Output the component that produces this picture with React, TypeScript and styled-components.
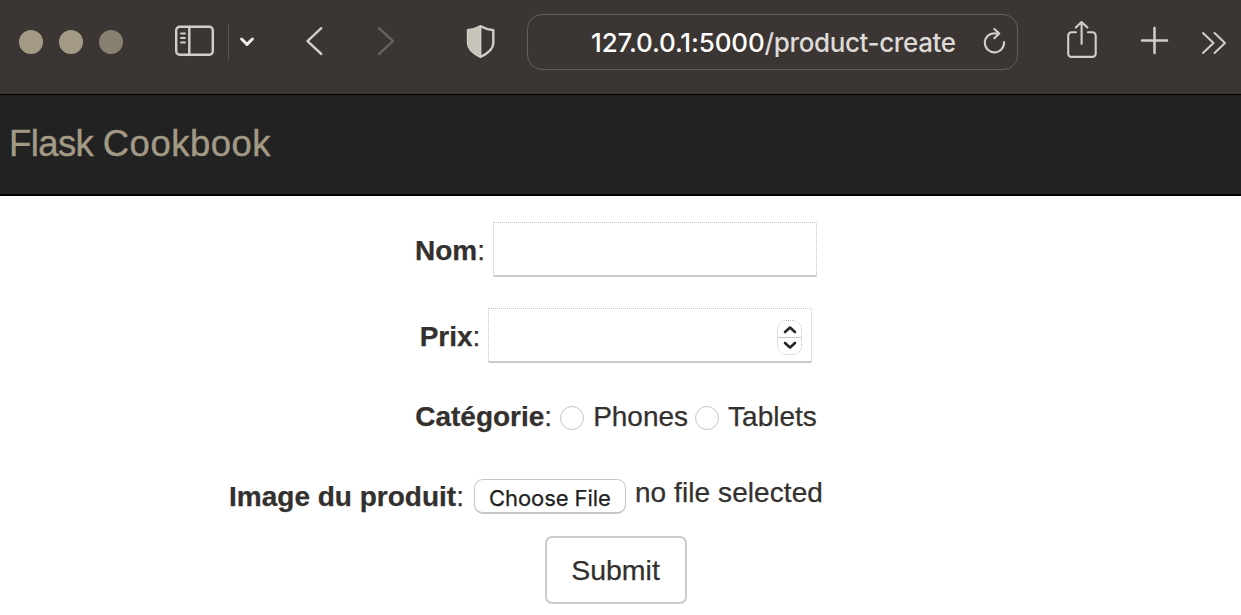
import React from 'react';
import styled, { createGlobalStyle } from 'styled-components';

const GlobalStyle = createGlobalStyle`
  * { box-sizing: border-box; }
  body {
    margin: 0;
    background: #fff;
    color: #33302e;
    font-family: "Liberation Sans", Arial, sans-serif;
    font-size: 28px;
    overflow: hidden;
  }
`;

const Page = styled.div`
  width: 1241px;
  height: 615px;
  overflow: hidden;
`;

const Toolbar = styled.header`
  display: flex;
  align-items: center;
  height: 94px;
  padding: 0 0 10px 19px;
  background: #3b3533;
`;

const Lights = styled.div`
  display: flex;
  gap: 16px;
`;

const Light = styled.span<{ $dim?: boolean }>`
  width: 24px;
  height: 24px;
  border-radius: 50%;
  background: ${(p) => (p.$dim ? '#888071' : '#a39a86')};
`;

const Glyph = styled.svg<{ $gap: number; $color?: string; $weight?: number }>`
  flex: none;
  display: block;
  margin-left: ${(p) => p.$gap}px;
  fill: none;
  stroke: ${(p) => p.$color ?? '#d2cec8'};
  stroke-width: ${(p) => p.$weight ?? 2.4};
  stroke-linecap: round;
  stroke-linejoin: round;
`;

const Divider = styled.span`
  width: 1px;
  height: 36px;
  margin-left: 13px;
  background: #5a5552;
`;

const AddressBar = styled.div`
  display: flex;
  align-items: center;
  flex: none;
  width: 491px;
  height: 56px;
  margin-left: 31px;
  padding-left: 63px;
  border: 1px solid #625e5b;
  border-radius: 15px;
`;

const Url = styled.span`
  width: 366px;
  padding-top: 2px;
  font-family: Inter, sans-serif;
  font-size: 26px;
  font-weight: 500;
  letter-spacing: -0.38px;
  line-height: 32px;
  white-space: nowrap;
  color: #dedad7;
`;

const Host = styled.span`
  letter-spacing: -0.15px;
  color: #fff;
`;

const Navbar = styled.nav`
  display: flex;
  align-items: center;
  height: 102px;
  padding: 0 9px 2px;
  border-top: 1px solid #000;
  border-bottom: 2px solid #000;
  background: #222;
`;

const Brand = styled.a`
  font-size: 36.5px;
  line-height: 40px;
  letter-spacing: 0.5px;
  color: #a39a86;
  -webkit-text-stroke: 0.4px #a39a86;
`;

const BrandLead = styled.span`
  letter-spacing: -0.6px;
`;

const Form = styled.form`
  display: flex;
  flex-direction: column;
  align-items: center;
  width: 1232px;
  padding-top: 26px;
  -webkit-text-stroke: 0.25px currentColor;
`;

const Row = styled.div<{ $height: number; $gap: number }>`
  display: flex;
  align-items: center;
  height: ${(p) => p.$height}px;
  margin-bottom: ${(p) => p.$gap}px;
  line-height: 32px;
  white-space: nowrap;
`;

const Label = styled.label<{ $gap?: number; $drop?: number }>`
  margin-right: ${(p) => p.$gap ?? 8}px;
  padding-top: ${(p) => p.$drop ?? 0}px;
`;

const Field = styled.div`
  display: flex;
  align-items: center;
  width: 324px;
  height: 55px;
  padding-right: 9px;
  border: 1px dotted #c4c4c4;
  border-bottom: 2px solid #cacaca;
`;

const Input = styled.input`
  flex: 1;
  min-width: 0;
  height: 48px;
  border: 0;
  outline: 0;
  background: transparent;
  font: inherit;
`;

const Stepper = styled.span`
  display: flex;
  flex-direction: column;
  width: 25px;
  height: 35px;
  margin-top: 4px;
  border: 1px dotted #bbb;
  border-radius: 9px;
`;

const Step = styled.span`
  display: flex;
  align-items: center;
  justify-content: center;
  height: 16px;
  padding-top: 2px;
  & + & { border-top: 1px solid #c8c8c8; height: 17px; padding-top: 0; }
`;

const StepArrow = styled.svg`
  fill: none;
  stroke: #262626;
  stroke-width: 2.6;
  stroke-linecap: round;
  stroke-linejoin: round;
`;

const Radio = styled.input`
  appearance: none;
  width: 24px;
  height: 24px;
  margin: 2px 9px 0 0;
  border: 1px solid #c6c6c6;
  border-radius: 50%;
`;

const Option = styled.label`
  display: flex;
  align-items: center;
  & + & { margin-left: 7px; }
`;

const FilePicker = styled.div`
  display: flex;
  align-items: center;
  width: 529px;
`;

const FileButton = styled.button`
  width: 152px;
  height: 35px;
  margin-right: 9px;
  padding: 3px 0 0;
  border: 1px solid #c6c6c6;
  border-bottom-width: 2px;
  border-radius: 9px;
  background: #fff;
  color: #1f1f1f;
  font-family: Inter, sans-serif;
  font-size: 22px;
  line-height: 28px;
  letter-spacing: -0.08px;
  white-space: nowrap;
`;

const FileStatus = styled.span`
  padding-bottom: 8px;
  letter-spacing: 0.08px;
`;

const Submit = styled.button`
  width: 142px;
  height: 68px;
  padding: 0 1px 0 0;
  border: 2px solid #cacaca;
  border-radius: 7px;
  background: #fff;
  color: #33302e;
  font: inherit;
  font-size: 28.5px;
`;

export default function App() {
  return (
    <Page>
      <GlobalStyle />
      <Toolbar>
        <Lights>
          <Light />
          <Light />
          <Light $dim />
        </Lights>
        <Glyph $gap={51} width="41" height="60" viewBox="174 12 41 60">
          <rect x="176.2" y="26.7" width="36.6" height="28" rx="3.5" />
          <path d="M189.3 27v28" />
          <path d="M181 33.5h4M181 38h4M181 42.5h4" strokeWidth="1.8" />
        </Glyph>
        <Divider />
        <Glyph $gap={10} $color="#efedeb" $weight={3} width="17" height="60" viewBox="239 12 17 60">
          <path d="M241.6 39l5.4 5.4 5.4-5.4" />
        </Glyph>
        <Glyph $gap={48} width="20" height="60" viewBox="304 12 20 60">
          <path d="M321.3 28.2L307.5 41.2l13.8 12.8" />
        </Glyph>
        <Glyph $gap={52} $color="#66615e" width="20" height="60" viewBox="376 12 20 60">
          <path d="M379 28.2l14 13-14 12.8" />
        </Glyph>
        <Glyph $gap={69} width="31" height="60" viewBox="465 12 31 60">
          <path d="M480.6 26.2c3.5 2 8 3.3 12.7 4v13c0 6.2-6.5 10.6-12.7 13.6-6.2-3-12.6-7.4-12.6-13.6v-13c4.7-.7 9.1-2 12.6-4z" />
          <path d="M480.6 26.2c-3.5 2-7.9 3.3-12.6 4v13c0 6.2 6.4 10.6 12.6 13.6z" fill="#c9c4ba" stroke="none" />
          <path d="M480.6 27v29" strokeWidth="1.5" />
        </Glyph>
        <AddressBar>
          <Url><Host>127.0.0.1:5000</Host>/product-create</Url>
          <Glyph $gap={24} $weight={2.1} width="26" height="60" viewBox="981 12 26 60">
            <path d="M994.5 33.2a9.6 9.6 0 1 0 9.5 8.8M994.3 29l5 4.5-5 4.8M998.5 33.5h-4" />
          </Glyph>
        </AddressBar>
        <Glyph $gap={47} $weight={2.1} width="34" height="60" viewBox="1065 12 34 60">
          <path d="M1076 32.3h-4.5a3.3 3.3 0 0 0-3.3 3.3v18a3.3 3.3 0 0 0 3.3 3.3h20.9a3.3 3.3 0 0 0 3.3-3.3v-18a3.3 3.3 0 0 0-3.3-3.3h-4.5M1081.6 44V22.5M1075.8 27.6l5.8-5.6 5.8 5.6" />
        </Glyph>
        <Glyph $gap={40} $weight={2.5} width="31" height="60" viewBox="1139 12 31 60">
          <path d="M1142 40.5h25M1154.5 28v25" />
        </Glyph>
        <Glyph $gap={30} $weight={2} width="28" height="60" viewBox="1200 12 28 60">
          <path d="M1203 33l10.500 10-10.500 10M1214.500 33l10.500 10-10.500 10" />
        </Glyph>
      </Toolbar>
      <Navbar>
        <Brand><BrandLead>Flask </BrandLead>Cookbook</Brand>
      </Navbar>
      <Form>
        <Row $height={55} $gap={31}>
          <Label $drop={2}><b>Nom</b>:</Label>
          <Field><Input type="text" aria-label="Nom" /></Field>
        </Row>
        <Row $height={55} $gap={31}>
          <Label $drop={2}><b>Prix</b>:</Label>
          <Field>
            <Input type="text" aria-label="Prix" />
            <Stepper>
              <Step>
                <StepArrow width="14" height="9" viewBox="0 0 14 9"><path d="M2 7l5-4.5L12 7" /></StepArrow>
              </Step>
              <Step>
                <StepArrow width="14" height="9" viewBox="0 0 14 9"><path d="M2 2l5 4.5L12 2" /></StepArrow>
              </Step>
            </Stepper>
          </Field>
        </Row>
        <Row $height={46} $gap={39}>
          <Label><b>Catégorie</b>:</Label>
          <Option><Radio type="radio" name="category" />Phones</Option>
          <Option><Radio type="radio" name="category" />Tablets</Option>
        </Row>
        <Row $height={35} $gap={22}>
          <Label $gap={10}><b>Image du produit</b>:</Label>
          <FilePicker>
            <FileButton type="button">Choose File</FileButton>
            <FileStatus>no file selected</FileStatus>
          </FilePicker>
        </Row>
        <Submit type="button">Submit</Submit>
      </Form>
    </Page>
  );
}
